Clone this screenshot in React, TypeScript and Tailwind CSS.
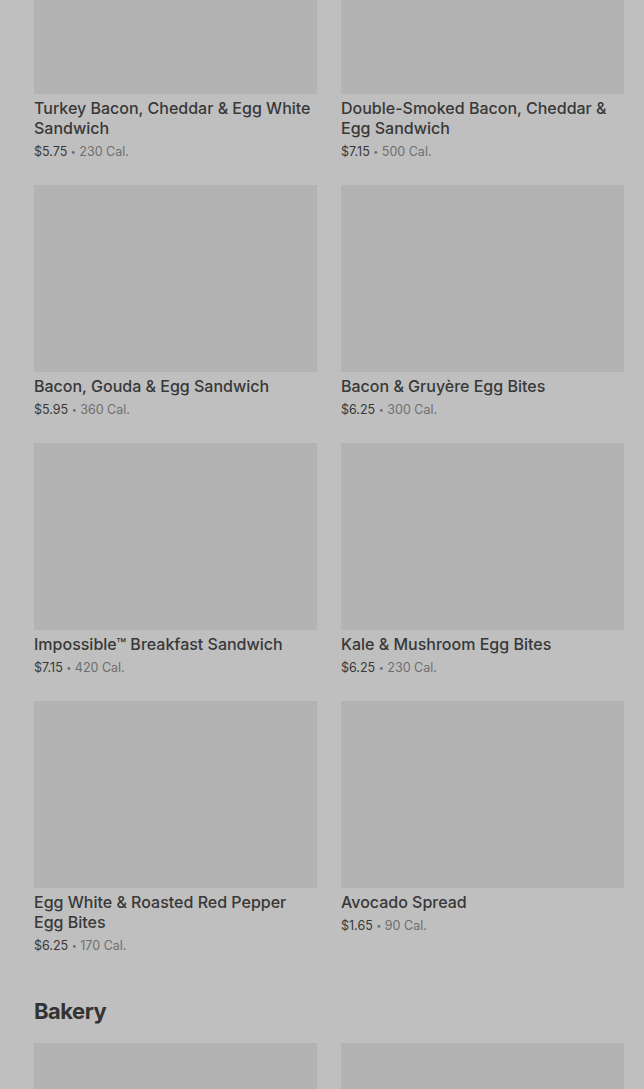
const items = [
  { name: "Turkey Bacon, Cheddar & Egg White Sandwich", price: "$5.75", cal: "230 Cal." },
  { name: "Double-Smoked Bacon, Cheddar & Egg Sandwich", price: "$7.15", cal: "500 Cal." },
  { name: "Bacon, Gouda & Egg Sandwich", price: "$5.95", cal: "360 Cal." },
  { name: "Bacon & Gruyère Egg Bites", price: "$6.25", cal: "300 Cal." },
  { name: "Impossible™ Breakfast Sandwich", price: "$7.15", cal: "420 Cal." },
  { name: "Kale & Mushroom Egg Bites", price: "$6.25", cal: "230 Cal." },
  { name: "Egg White & Roasted Red Pepper Egg Bites", price: "$6.25", cal: "170 Cal." },
  { name: "Avocado Spread", price: "$1.65", cal: "90 Cal." },
];

function ItemCard({ name, price, cal }: { name: string; price: string; cal: string }) {
  return (
    <div className="flex flex-col">
      <div className="h-[187px] bg-[#b3b3b3]" />
      <p className="mt-1 text-[16px] leading-[20px] font-medium text-[#383838]">{name}</p>
      <p className="mt-[5px] text-[12.5px] leading-[18px] text-[#6e6e6e]">
        <span className="text-[#383838]">{price}</span>{" "}
        <span className="text-[9px] align-[1px]">•</span> {cal}
      </p>
    </div>
  );
}

export default function App() {
  return (
    <div
      className="h-[1089px] overflow-hidden bg-[#bfbfbf]"
      style={{ fontFamily: "Inter, 'Noto Sans', sans-serif" }}
    >
      <div className="mt-[-93px] px-[34px] pr-[20px]">
        <div className="grid grid-cols-2 gap-x-6 gap-y-[24px]">
          {items.map((it) => (
            <ItemCard key={it.name} {...it} />
          ))}
        </div>

        {/* Bakery */}
        <h2 className="mt-[42px] text-[22px] leading-[28px] font-bold tracking-[-0.5px] text-[#333333]">
          Bakery
        </h2>
        <div className="mt-[18px] grid grid-cols-2 gap-x-6">
          <div className="h-[187px] bg-[#b3b3b3]" />
          <div className="h-[187px] bg-[#b3b3b3]" />
        </div>
      </div>
    </div>
  );
}
